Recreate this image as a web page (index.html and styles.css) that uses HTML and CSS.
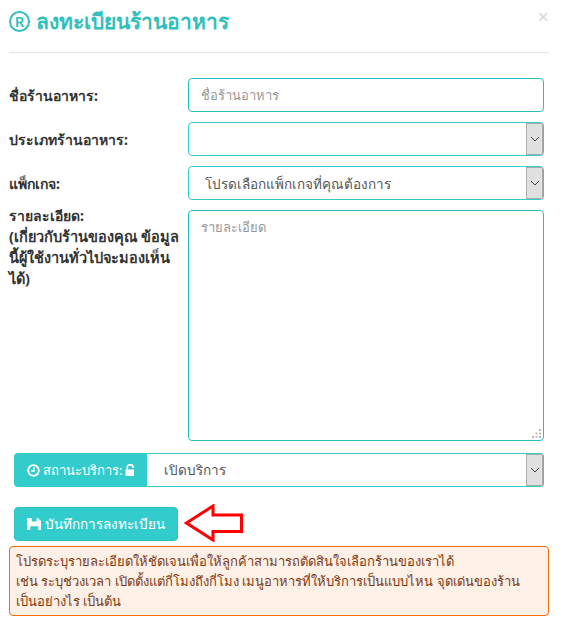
FILE: index.html
```html
<!DOCTYPE html>
<html lang="th">
<head>
    <meta charset="UTF-8">
    <meta name="viewport" content="width=device-width, initial-scale=1.0">
    <title>ลงทะเบียนร้านอาหาร</title>
    <link rel="stylesheet" href="styles.css">
</head>
<body>
    <div class="modal">
        <div class="modal-header">
            <h4 class="modal-title"><span class="reg-mark">R</span> ลงทะเบียนร้านอาหาร</h4>
            <span class="close">×</span>
        </div>
        <form class="form">
            <div class="row">
                <label class="label">ชื่อร้านอาหาร:</label>
                <input class="control control-dark" type="text" placeholder="ชื่อร้านอาหาร">
            </div>
            <div class="row">
                <label class="label">ประเภทร้านอาหาร:</label>
                <div class="select-wrap">
                    <select class="control select"><option></option></select>
                    <span class="arrow"><svg width="10" height="6" viewBox="0 0 10 6"><path d="M1 1l4 4 4-4" fill="none" stroke="#444" stroke-width="1"/></svg></span>
                </div>
            </div>
            <div class="row">
                <label class="label">แพ็กเกจ:</label>
                <div class="select-wrap">
                    <select class="control select"><option>โปรดเลือกแพ็กเกจที่คุณต้องการ</option></select>
                    <span class="arrow"><svg width="10" height="6" viewBox="0 0 10 6"><path d="M1 1l4 4 4-4" fill="none" stroke="#444" stroke-width="1"/></svg></span>
                </div>
            </div>
            <div class="row row-top">
                <label class="label label-top">รายละเอียด:<br><span class="label-note">(เกี่ยวกับร้านของคุณ ข้อมูลนี้ผู้ใช้งานทั่วไปจะมองเห็นได้)</span></label>
                <div class="textarea-wrap">
                    <textarea class="control control-dark textarea" placeholder="รายละเอียด"></textarea>
                    <svg class="grip" width="9" height="9" viewBox="0 0 9 9" fill="#bbb"><rect x="7" y="0" width="2" height="2"/><rect x="3.500" y="3.500" width="2" height="2"/><rect x="7" y="3.500" width="2" height="2"/><rect x="0" y="7" width="2" height="2"/><rect x="3.500" y="7" width="2" height="2"/><rect x="7" y="7" width="2" height="2"/></svg>
                </div>
            </div>
            <div class="input-group">
                <span class="addon">
                    <svg class="icon" width="13" height="13" viewBox="0 0 13 13"><circle cx="6.500" cy="6.500" r="5.300" fill="none" stroke="#fff" stroke-width="1.800"/><path d="M7 3v4H4" fill="none" stroke="#fff" stroke-width="1.300"/></svg>
                    <span>สถานะบริการ:</span>
                    <svg class="icon" width="10" height="12" viewBox="0 0 10 12"><path d="M2.200 6V3.700a3 2.800 0 0 1 6-.2V4" fill="none" stroke="#fff" stroke-width="1.700"/><rect x="0.500" y="5.500" width="8.500" height="6.500" rx="0.500" fill="#fff"/></svg>
                </span>
                <div class="select-wrap group-select">
                    <select class="select group-control"><option>เปิดบริการ</option></select>
                    <span class="arrow"><svg width="10" height="6" viewBox="0 0 10 6"><path d="M1 1l4 4 4-4" fill="none" stroke="#444" stroke-width="1"/></svg></span>
                </div>
            </div>
            <div class="actions">
                <button class="button" type="button">
                    <svg class="icon" width="14" height="12" viewBox="0 0 14 12"><path d="M0 0H4.700V3.500H9.700V0H11L14 3V12H11.300V8.300H3.300V12H0Z" fill="#fff"/></svg>
                    <span>บันทึกการลงทะเบียน</span>
                </button>
                <svg class="pointer" width="60" height="38" viewBox="0 0 60 38"><path d="M2.500 19 L29 2 V11 H57.500 V27.500 H29 V36 Z" fill="#fff" stroke="#f00" stroke-width="3"/></svg>
            </div>
            <div class="alert">โปรดระบุรายละเอียดให้ชัดเจนเพื่อให้ลูกค้าสามารถตัดสินใจเลือกร้านของเราได้<br>เช่น ระบุช่วงเวลา เปิดตั้งแต่กี่โมงถึงกี่โมง เมนูอาหารที่ให้บริการเป็นแบบไหน จุดเด่นของร้านเป็นอย่างไร เป็นต้น</div>
        </form>
    </div>
</body>
</html>
```

FILE: styles.css
```css
body {
    margin: 0;
    background: #fff;
    font-family: "Noto Sans", "Open Sans", "Liberation Sans", sans-serif;
    font-size: 14px;
    color: #333;
}
.modal {
    width: 562px;
    height: 631px;
    padding: 0 13px 0 9px;
    box-sizing: border-box;
}
.modal-header {
    height: 52px;
    border-bottom: 1px solid #e5e5e5;
    display: flex;
    justify-content: space-between;
    align-items: flex-start;
}
.modal-title {
    margin: 0;
    padding-top: 4px;
    font-size: 21px;
    line-height: 34px;
    font-weight: 700;
    color: #33bfbd;
    display: flex;
    align-items: center;
    gap: 6px;
}
.reg-mark {
    width: 21px;
    height: 21px;
    box-sizing: border-box;
    border: 2.500px solid #33bfbd;
    border-radius: 50%;
    font-size: 15px;
    font-weight: 600;
    line-height: 16px;
    text-align: center;
}
.close {
    font-size: 20px;
    line-height: 20px;
    margin-top: 7px;
    color: #d8d8d8;
}
.form {
    padding: 25px 5px 0 0;
}
.row {
    display: flex;
    align-items: center;
    margin-bottom: 10px;
}
.row-top {
    align-items: flex-start;
    margin-bottom: 12px;
}
.label {
    width: 179px;
    padding: 2px 6px 0 0;
    box-sizing: border-box;
    font-weight: 700;
    line-height: 20px;
}
.label-top {
    padding-top: 0;
    margin-top: -4px;
}
.label-note {
    font-size: 14.500px;
}
.control {
    width: 356px;
    height: 34px;
    box-sizing: border-box;
    padding: 6px 12px;
    border: 1px solid #33cccc;
    border-radius: 4px;
    background: #fff;
    font: inherit;
    font-size: 13px;
    color: #555;
}
.control-dark {
    border-color: #26bfbf;
}
.control::placeholder {
    color: #999;
}
.select-wrap,
.textarea-wrap {
    position: relative;
}
.select {
    appearance: none;
    display: block;
    padding: 7px 12px 5px 16px;
    font-size: 13.500px;
}
.arrow {
    position: absolute;
    top: 1px;
    right: 1px;
    bottom: 1px;
    width: 17px;
    box-sizing: border-box;
    background: #e0e0e0;
    border: 1px solid #aaa;
    display: flex;
    align-items: center;
    justify-content: center;
}
.textarea {
    height: 231px;
    resize: none;
    display: block;
}
.grip {
    position: absolute;
    right: 3px;
    bottom: 3px;
}
.input-group {
    display: flex;
    margin-left: 5px;
    width: 530px;
    height: 34px;
}
.addon {
    width: 133px;
    padding-left: 13px;
    box-sizing: border-box;
    background: #33cccc;
    color: #fff;
    font-size: 13px;
    border-radius: 4px 0 0 4px;
    display: flex;
    align-items: center;
    gap: 3px;
    white-space: nowrap;
}
.group-select {
    flex: 1;
}
.group-control {
    width: 100%;
    height: 34px;
    box-sizing: border-box;
    padding: 6px 12px 6px 17px;
    border: 1px solid #33cccc;
    border-left: none;
    border-radius: 0 4px 4px 0;
    background: #fff;
    font: inherit;
    font-size: 13.500px;
    color: #555;
}
.actions {
    display: flex;
    align-items: center;
    gap: 6px;
    height: 34px;
    margin: 20px 0 5px 5px;
}
.button {
    width: 164px;
    height: 34px;
    padding: 0 0 0 12px;
    background: #33cccc;
    border: 1px solid #2ec0c0;
    border-radius: 4px;
    color: #fff;
    font: inherit;
    font-size: 13.500px;
    display: flex;
    align-items: center;
    gap: 4px;
}
.pointer {
    flex: none;
    margin-top: -2px;
}
.alert {
    width: 540px;
    box-sizing: border-box;
    padding: 4px 13px 4px 6px;
    background: #fdf0e6;
    border: 1px solid #f26c0d;
    border-radius: 4px;
    color: #7f3a14;
    font-size: 13px;
    line-height: 20px;
}
```
